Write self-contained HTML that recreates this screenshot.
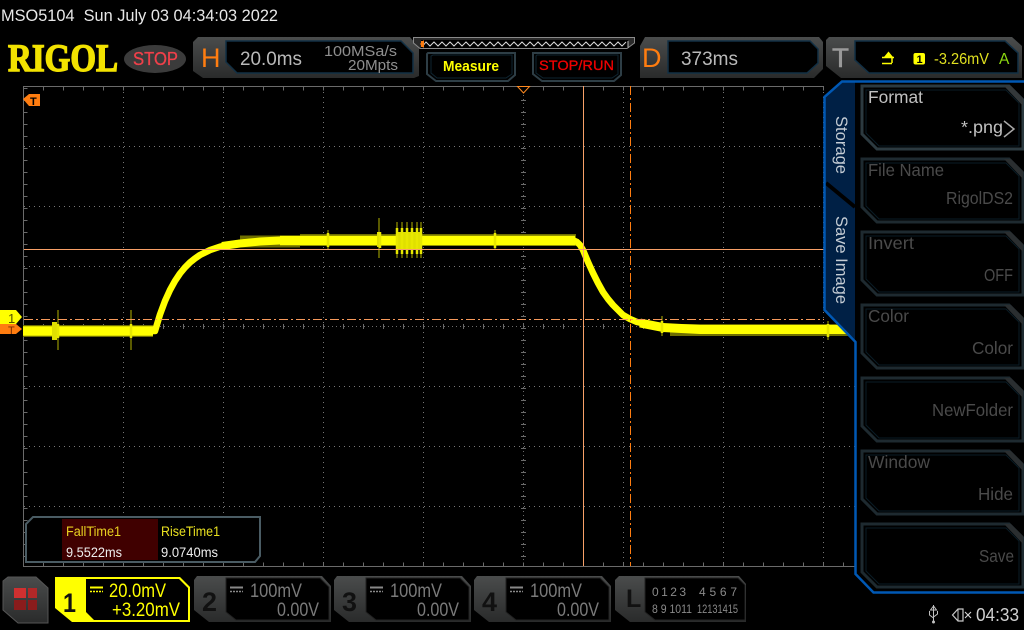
<!DOCTYPE html>
<html><head><meta charset="utf-8"><style>
html,body{margin:0;padding:0;background:#000;width:1024px;height:630px;overflow:hidden}
svg{display:block}
text{font-family:"Liberation Sans",sans-serif}
</style></head><body>
<svg width="1024" height="630" viewBox="0 0 1024 630" xmlns="http://www.w3.org/2000/svg">
<defs>
<linearGradient id="g" x1="0" y1="0" x2="0" y2="1"><stop offset="0" stop-color="#4a4c4c"/><stop offset="1" stop-color="#2a2b2b"/></linearGradient>
</defs>
<rect width="1024" height="630" fill="#000"/>
<text x="1" y="21" font-size="17" fill="#e8e8e8" textLength="277" lengthAdjust="spacingAndGlyphs" xml:space="preserve">MSO5104  Sun July 03 04:34:03 2022</text>
<text x="8" y="71" font-size="39" font-weight="700" fill="#f2e200" stroke="#f2e200" stroke-width="1.400" style="font-family:'Liberation Serif',serif" textLength="110" lengthAdjust="spacingAndGlyphs">RIGOL</text>
<ellipse cx="155" cy="59" rx="31" ry="14" fill="#3b3b3b"/>
<text x="133" y="65" font-size="18" fill="#f0404a" stroke="#f0404a" stroke-width=".3" textLength="45" lengthAdjust="spacingAndGlyphs">STOP</text>
<!-- H box -->
<path d="M198 37H410L419 48V76L414 78H203L193 71V42Z" fill="url(#g)"/>
<path d="M226 41H401L413 53V73H237L226 62Z" fill="#000" stroke="#123045" stroke-width="1.500"/>
<text x="201" y="67" font-size="27" fill="#ff7d10">H</text>
<text x="240" y="65" font-size="19.500" fill="#b9b9b9" textLength="62" lengthAdjust="spacingAndGlyphs">20.0ms</text>
<text x="324" y="56" font-size="15" fill="#8f8f8f" textLength="73" lengthAdjust="spacingAndGlyphs">100MSa/s</text>
<text x="348" y="70" font-size="15" fill="#8f8f8f" textLength="50" lengthAdjust="spacingAndGlyphs">20Mpts</text>
<!-- memory bar -->
<path d="M413.500 37.500H634.500V43L627 48.500H420L413.500 43Z" fill="#2a2a2a" stroke="#8a8a8a"/>
<rect x="421" y="40" width="207" height="8" fill="#000"/>
<path d="M422 47L426 42L430 46L434 42L438 46L442 42L446 46L450 42L454 46L458 42L462 46L466 42L470 46L474 42L478 46L482 42L486 46L490 42L494 46L498 42L502 46L506 42L510 46L514 42L518 46L522 42L526 46L530 42L534 46L538 42L542 46L546 42L550 46L554 42L558 46L562 42L566 46L570 42L574 46L578 42L582 46L586 42L590 46L594 42L598 46L602 42L606 46L610 42L614 46L618 42L622 46L626 42" fill="none" stroke="#d8d8d8"/>
<path d="M628 41V48" stroke="#bbb"/>
<path d="M420 44L424 40V48Z" fill="#ff7d10"/><path d="M422 41V47" stroke="#ff7d10" stroke-width="2"/>
<!-- Measure / Stop -->
<path d="M428 53H515V75L508 81H436L427 74V54Z" fill="#000" stroke="#2e3e46" stroke-width="2"/>
<path d="M433 55H512V74L506 78H437L431 73V56Z" fill="none" stroke="#0e2430"/>
<text x="443" y="71" font-size="14.500" font-weight="700" fill="#ffff00" textLength="56" lengthAdjust="spacingAndGlyphs">Measure</text>
<path d="M533 53H621V75L614 81H542L533 74Z" fill="#000" stroke="#2e3e46" stroke-width="2"/>
<path d="M537 55H618V74L612 78H543L536 73V56Z" fill="none" stroke="#0e2430"/>
<text x="539" y="70" font-size="14" stroke="#f00000" stroke-width=".3" fill="#f00000" textLength="75" lengthAdjust="spacingAndGlyphs">STOP/RUN</text>
<!-- D box -->
<path d="M645 37H819L823 42V69L814 78H640V46Z" fill="url(#g)"/>
<path d="M668 41H810L818 49V63L807 73H668V41Z" fill="#000" stroke="#123045" stroke-width="1.500"/>
<text x="642" y="67" font-size="27" fill="#ff7d10">D</text>
<text x="681" y="65" font-size="19.500" fill="#b9b9b9" textLength="57" lengthAdjust="spacingAndGlyphs">373ms</text>
<!-- T box -->
<path d="M829 37H1012L1022 46V78H841L826 66V40Z" fill="url(#g)"/>
<path d="M855 41H1005L1018 53V73H869L855 60Z" fill="#000" stroke="#123045" stroke-width="1.500"/>
<text x="832" y="67" font-size="27" fill="#9a9a9a" stroke="#9a9a9a" stroke-width=".5" textLength="17" lengthAdjust="spacingAndGlyphs">T</text>
<path d="M884 57L888.500 51.500L893 57Z" fill="#ffff00"/>
<path d="M882 57.500H894M892 57.500V63M882 63.500H892" fill="none" stroke="#ffff00" stroke-width="1.500"/>
<rect x="913.500" y="53" width="11.500" height="11.500" rx="2" fill="#ffff00"/>
<text x="916.500" y="63" font-size="11" font-weight="700" fill="#000">1</text>
<text x="934" y="64" font-size="15.500" fill="#e0e020" textLength="55" lengthAdjust="spacingAndGlyphs">-3.26mV</text>
<text x="999" y="64" font-size="15.500" fill="#8cd810">A</text>
<!-- Grid -->
<g fill="none">
<path d="M23.500 566V86.500H824" stroke="#6a6a6a"/>
<path d="M23 566.500H855" stroke="#6a6a6a"/>
<path d="M24 146.500H824M24 206.500H824M24 266.500H824M24 386.500H855M24 446.500H855M24 506.500H855" stroke="#777" stroke-dasharray="1 4"/>
<path d="M123.500 87V566M223.500 87V566M323.500 87V566M423.500 87V566M623.500 87V566M723.500 87V566M823.500 87V566" stroke="#777" stroke-dasharray="1 4"/>
<path d="M24 326.500H855M523.500 87V566" stroke="#6a6a6a" stroke-dasharray="1 3"/>
<path d="M23 88.500H824" stroke="#6a6a6a" stroke-width="4" stroke-dasharray="1 19" stroke-dashoffset="-20"/>
<path d="M23 564.500H855" stroke="#6a6a6a" stroke-width="4" stroke-dasharray="1 19" stroke-dashoffset="-20"/>
<path d="M25.500 86V566" stroke="#6a6a6a" stroke-width="4" stroke-dasharray="1 11" stroke-dashoffset="-2"/>
<path d="M23 326.500H855" stroke="#6a6a6a" stroke-width="5" stroke-dasharray="1 19" stroke-dashoffset="-20"/>
<path d="M523.500 86V566" stroke="#6a6a6a" stroke-width="5" stroke-dasharray="1 11" stroke-dashoffset="-2"/>
</g>
<!-- trace -->
<g fill="none" stroke-linejoin="round" stroke-linecap="butt">
<path d="M23 331H153M240 241.500H300M300 240H576M670 330H855" stroke="#6e6e00" stroke-width="12"/>
<path d="M23 331H155L160 314.500L165 301L170 290L175 280.900L180 273.500L185 267.400L190 262.400L195 258.400L200 255L210 250.100L220 246.700L230 244.500L240 243L250 242L270 240.900L300 240.200H573L577 242L580 245L583 250L588 262L593 273L598 283L603 292L608 299L613 305L618 310L623 315L630 319L637 322L650 325L663 327L680 328.500L703 329.500L855 330" stroke="#ffff00" stroke-width="6.500"/>
<path d="M23 331H153" stroke="#ffff00" stroke-width="9.500"/>
<path d="M222 246L240 243.500L260 241.500L280 240.500H300" stroke="#ffff00" stroke-width="8"/>
<path d="M280 240.500H575" stroke="#ffff00" stroke-width="9.500"/>
<path d="M640 323L663 327.500L700 329.500H855" stroke="#ffff00" stroke-width="9"/>
<path d="M58 310V350M131 310V350M328 230V250M379 218V258M397 222V258M402 222V258M407 222V258M412 222V258M417 222V258M421 222V258M495 230V250M662 316V336M828 321V340" stroke="#5a5a00" stroke-width="2"/>
<path d="M52 322H57V340H52ZM396 232H422V250H396ZM377 232H381V247H377Z" fill="#e0e000" stroke="none"/>
<path d="M58 324V338M131 324V338M328 233V247M380 232V248M397 228V254M402 228V254M407 228V254M412 228V254M417 228V254M421 228V254M495 233V248M662 321V333M828 324V337" stroke="#e8e800" stroke-width="2.500"/>
</g>
<!-- cursors -->
<path d="M24 249.500H824" stroke="#f7a068"/>
<path d="M583.500 86V566" stroke="#f7a068"/>
<path d="M24 319.500H824" stroke="#f79a5c" stroke-dasharray="9 3 2 3"/>
<path d="M630.500 86V566" stroke="#ff7d10" stroke-dasharray="9 3 2 3"/>
<!-- markers -->
<path d="M517.500 86.500H529.500L523.500 93Z" fill="#000" stroke="#ff8a20"/>
<path d="M23 99L29 94H40V106H29Z" fill="#ff7d10"/>
<text x="30" y="105" font-size="11" font-weight="700" fill="#000">T</text>
<path d="M0 310H16L22 317L16 324H0Z" fill="#ffff00"/>
<path d="M0 324H16L22 329L16 334H0Z" fill="#ff7d10"/>
<text x="8" y="323" font-size="13" fill="#555500">1</text>
<text x="8" y="334" font-size="11" fill="#7a3000">T</text>
<!-- measure box -->
<path d="M33 517H260V556L255 562H26V524Z" fill="#000" stroke="#4a5c64" stroke-width="2"/>
<rect x="62" y="519" width="96" height="41" fill="#400000"/>
<text x="66" y="536" font-size="13.500" fill="#e8d020" textLength="55" lengthAdjust="spacingAndGlyphs">FallTime1</text>
<text x="161" y="536" font-size="13.500" fill="#e8e020" textLength="59" lengthAdjust="spacingAndGlyphs">RiseTime1</text>
<text x="66" y="557" font-size="13.500" fill="#eee" textLength="56" lengthAdjust="spacingAndGlyphs">9.5522ms</text>
<text x="161" y="557" font-size="13.500" fill="#eee" textLength="57" lengthAdjust="spacingAndGlyphs">9.0740ms</text>
<!-- right panel -->
<path d="M825 97L842 82H1024V594H874L856 574V342L825 310Z" fill="#000"/>
<path d="M825 97L842 82H855V342L825 310Z" fill="#002045"/>
<path d="M826 183L855 207" stroke="#000" stroke-width="4"/>
<path d="M1024 81.500H842L824.500 97V310L855.500 342V574L873.500 592.500H1024" fill="none" stroke="#0058b4" stroke-width="2.500"/>
<text transform="translate(836 116) rotate(90)" font-size="16.500" fill="#c4ccd4" textLength="58" lengthAdjust="spacingAndGlyphs">Storage</text>
<text transform="translate(836 216) rotate(90)" font-size="16.500" fill="#c4ccd4" textLength="88" lengthAdjust="spacingAndGlyphs">Save Image</text>
<!-- soft keys -->
<g fill="none">
<path d="M862 86H1009L1023 100V149H877L862 134Z" fill="#000" stroke="#2c3a40" stroke-width="3"/>
<path d="M866 90H1006L1019 103V146H879L866 133Z" stroke="#0a1c26"/>
<path d="M1004 86H1011L1023 98V106Z" fill="#33383a"/>
<path d="M862 159H1009L1023 173V222H877L862 207Z" fill="#000" stroke="#1e2a30" stroke-width="3"/>
<path d="M866 163H1006L1019 176V219H879L866 206Z" stroke="#0a1c26"/>
<path d="M1004 159H1011L1023 171V179Z" fill="#2a2e30"/>
<path d="M862 232H1009L1023 246V295H877L862 280Z" fill="#000" stroke="#1e2a30" stroke-width="3"/>
<path d="M866 236H1006L1019 249V292H879L866 279Z" stroke="#0a1c26"/>
<path d="M1004 232H1011L1023 244V252Z" fill="#2a2e30"/>
<path d="M862 305H1009L1023 319V368H877L862 353Z" fill="#000" stroke="#1e2a30" stroke-width="3"/>
<path d="M866 309H1006L1019 322V365H879L866 352Z" stroke="#0a1c26"/>
<path d="M1004 305H1011L1023 317V325Z" fill="#2a2e30"/>
<path d="M862 378H1009L1023 392V441H877L862 426Z" fill="#000" stroke="#1e2a30" stroke-width="3"/>
<path d="M866 382H1006L1019 395V438H879L866 425Z" stroke="#0a1c26"/>
<path d="M1004 378H1011L1023 390V398Z" fill="#2a2e30"/>
<path d="M862 451H1009L1023 465V514H877L862 499Z" fill="#000" stroke="#1e2a30" stroke-width="3"/>
<path d="M866 455H1006L1019 468V511H879L866 498Z" stroke="#0a1c26"/>
<path d="M1004 451H1011L1023 463V471Z" fill="#2a2e30"/>
<path d="M862 524H1009L1023 538V587H877L862 572Z" fill="#000" stroke="#1e2a30" stroke-width="3"/>
<path d="M866 528H1006L1019 541V584H879L866 571Z" stroke="#0a1c26"/>
<path d="M1004 524H1011L1023 536V544Z" fill="#2a2e30"/>
</g>
<text x="868" y="103" font-size="17.500" fill="#c0c0c0" textLength="55" lengthAdjust="spacingAndGlyphs">Format</text>
<text x="961" y="133" font-size="17.500" fill="#c0c0c0" textLength="42" lengthAdjust="spacingAndGlyphs">*.png</text>
<path d="M1004 121L1014 129L1004 137" fill="none" stroke="#a8a8a8" stroke-width="1.500"/>
<text x="868" y="176" font-size="17.500" fill="#4a4a4a" textLength="76" lengthAdjust="spacingAndGlyphs">File Name</text>
<text x="946" y="204" font-size="17.500" fill="#4a4a4a" textLength="67" lengthAdjust="spacingAndGlyphs">RigolDS2</text>
<text x="868" y="249" font-size="17.500" fill="#4a4a4a" textLength="46" lengthAdjust="spacingAndGlyphs">Invert</text>
<text x="984" y="281" font-size="17.500" fill="#4a4a4a" textLength="29" lengthAdjust="spacingAndGlyphs">OFF</text>
<text x="868" y="322" font-size="17.500" fill="#4a4a4a" textLength="41" lengthAdjust="spacingAndGlyphs">Color</text>
<text x="972" y="354" font-size="17.500" fill="#4a4a4a" textLength="41" lengthAdjust="spacingAndGlyphs">Color</text>
<text x="932" y="416" font-size="17.500" fill="#4a4a4a" textLength="81" lengthAdjust="spacingAndGlyphs">NewFolder</text>
<text x="868" y="468" font-size="17.500" fill="#4a4a4a" textLength="62" lengthAdjust="spacingAndGlyphs">Window</text>
<text x="978" y="500" font-size="17.500" fill="#4a4a4a" textLength="35" lengthAdjust="spacingAndGlyphs">Hide</text>
<text x="979" y="562" font-size="17.500" fill="#4a4a4a" textLength="35" lengthAdjust="spacingAndGlyphs">Save</text>
<!-- bottom -->
<path d="M8 577H36L48 588V623H18L3 610V581Z" fill="url(#g)" stroke="#555"/>
<rect x="14" y="588" width="12" height="10" fill="#d03030"/><rect x="28" y="588" width="9" height="10" fill="#b02828"/>
<rect x="14" y="600" width="12" height="10" fill="#8a1c1c"/><rect x="28" y="600" width="9" height="10" fill="#8a1c1c"/>
<path d="M55 577H180L190 587V622H72L55 608Z" fill="#ffff00"/>
<path d="M86 579H179L188 588V620H94L86 612Z" fill="#000"/>
<text x="63" y="612" font-size="27" font-weight="700" fill="#111" textLength="13" lengthAdjust="spacingAndGlyphs">1</text>
<path d="M90 587.500H103" stroke="#ffff00" stroke-width="2"/><path d="M90 591.500H103" stroke="#ffff00" stroke-dasharray="2 1" stroke-width="1.500"/>
<text x="109" y="597" font-size="19" fill="#ffff00" textLength="57" lengthAdjust="spacingAndGlyphs">20.0mV</text>
<text x="112" y="616" font-size="19" fill="#ffff00" textLength="68" lengthAdjust="spacingAndGlyphs">+3.20mV</text>

<path d="M197 576H322L331 586V622H209L194 610V580Z" fill="url(#g)"/>
<path d="M226 578H320L329 587V620H236L226 612Z" fill="#000" stroke="#222"/>
<text x="202" y="611" font-size="27" font-weight="700" fill="#111" textLength="15" lengthAdjust="spacingAndGlyphs">2</text>
<path d="M230 587.500H243" stroke="#888" stroke-width="2"/><path d="M230 591.500H243" stroke="#888" stroke-dasharray="2 1" stroke-width="1.500"/>
<text x="250" y="597" font-size="19" fill="#7a7a7a" textLength="52" lengthAdjust="spacingAndGlyphs">100mV</text>
<text x="277" y="616" font-size="19" fill="#7a7a7a" textLength="42" lengthAdjust="spacingAndGlyphs">0.00V</text>

<path d="M337 576H462L471 586V622H349L334 610V580Z" fill="url(#g)"/>
<path d="M366 578H460L469 587V620H376L366 612Z" fill="#000" stroke="#222"/>
<text x="342" y="611" font-size="27" font-weight="700" fill="#111" textLength="15" lengthAdjust="spacingAndGlyphs">3</text>
<path d="M370 587.500H383" stroke="#888" stroke-width="2"/><path d="M370 591.500H383" stroke="#888" stroke-dasharray="2 1" stroke-width="1.500"/>
<text x="390" y="597" font-size="19" fill="#7a7a7a" textLength="52" lengthAdjust="spacingAndGlyphs">100mV</text>
<text x="417" y="616" font-size="19" fill="#7a7a7a" textLength="42" lengthAdjust="spacingAndGlyphs">0.00V</text>

<path d="M477 576H602L611 586V622H489L474 610V580Z" fill="url(#g)"/>
<path d="M506 578H600L609 587V620H516L506 612Z" fill="#000" stroke="#222"/>
<text x="482" y="611" font-size="27" font-weight="700" fill="#111" textLength="15" lengthAdjust="spacingAndGlyphs">4</text>
<path d="M510 587.500H523" stroke="#888" stroke-width="2"/><path d="M510 591.500H523" stroke="#888" stroke-dasharray="2 1" stroke-width="1.500"/>
<text x="530" y="597" font-size="19" fill="#7a7a7a" textLength="52" lengthAdjust="spacingAndGlyphs">100mV</text>
<text x="557" y="616" font-size="19" fill="#7a7a7a" textLength="42" lengthAdjust="spacingAndGlyphs">0.00V</text>

<path d="M619 576H739L746 584V622H630L615 610V580Z" fill="url(#g)"/>
<path d="M645 578H738L745 585V620H655L645 612Z" fill="#000" stroke="#222"/>
<text x="626" y="607" font-size="25" font-weight="700" fill="#111">L</text>
<text x="652" y="596" font-size="12" fill="#8a8a8a" textLength="34" lengthAdjust="spacing">0 1 2 3</text>
<text x="699" y="596" font-size="12" fill="#8a8a8a" textLength="38" lengthAdjust="spacing">4 5 6 7</text>
<text x="652" y="613" font-size="12" fill="#8a8a8a" textLength="40" lengthAdjust="spacingAndGlyphs">8 9 1011</text>
<text x="697" y="613" font-size="12" fill="#8a8a8a" textLength="41" lengthAdjust="spacingAndGlyphs">12131415</text>
<!-- status icons -->
<path d="M933.500 605V622M933.500 606L930.500 610H936.500ZM929.500 611V615L933.500 618M937.500 611V614L933.500 617" fill="none" stroke="#c0c0c0"/>
<circle cx="933.500" cy="622" r="1.500" fill="#c0c0c0"/>
<path d="M952.500 615L958 609H963V621H958Z" fill="none" stroke="#c8c8c8" stroke-width="1.200"/><path d="M958 609V621" stroke="#c8c8c8"/>
<path d="M965 612L971 618M971 612L965 618" stroke="#d8d8d8" stroke-width="1.100"/>
<text x="976" y="621" font-size="18" fill="#d0d0d0" textLength="43" lengthAdjust="spacingAndGlyphs">04:33</text>
</svg>
</body></html>
